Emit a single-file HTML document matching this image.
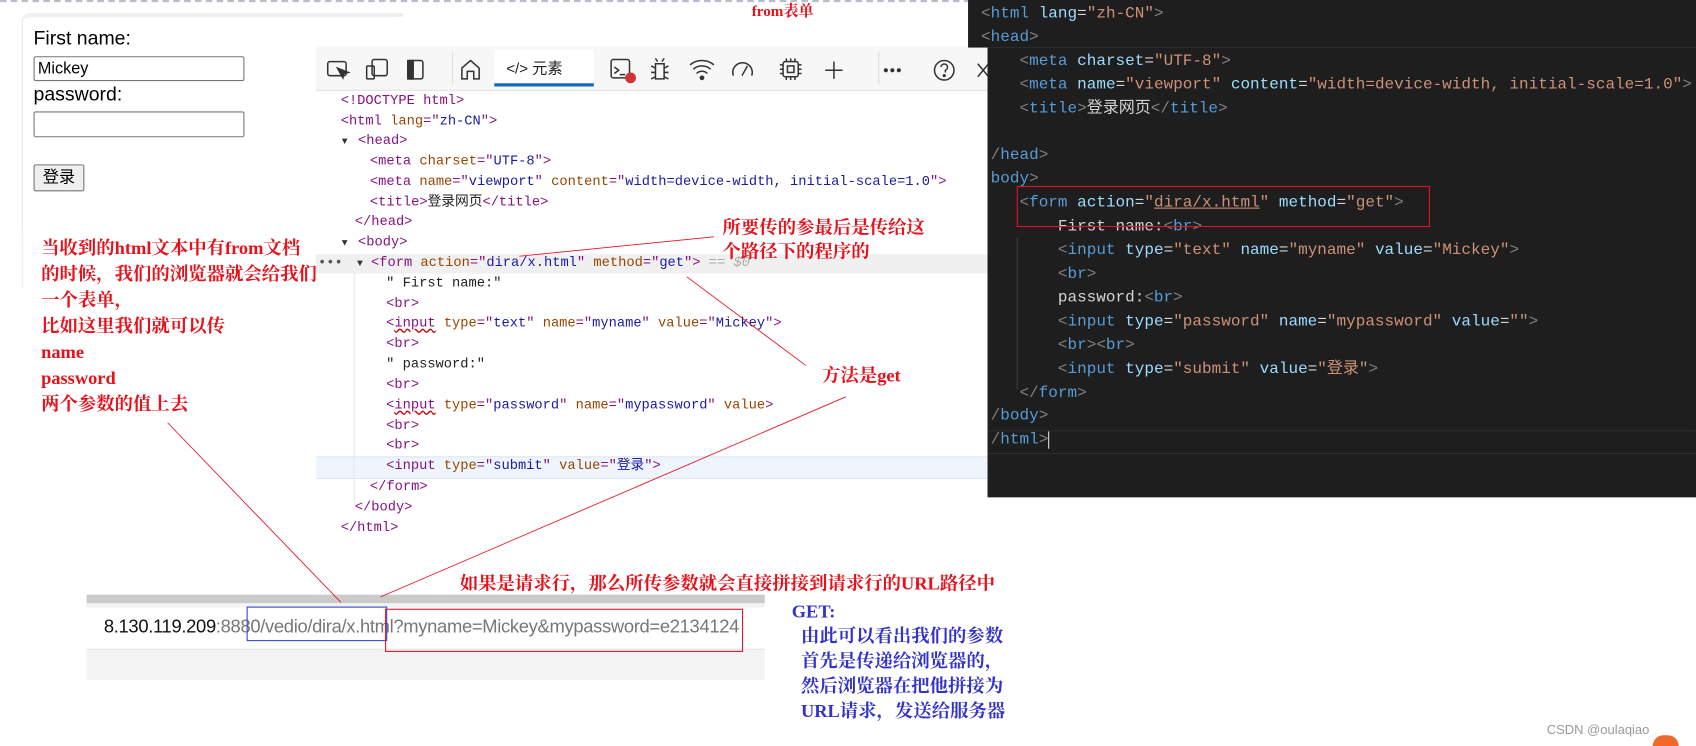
<!DOCTYPE html>
<html><head><meta charset="utf-8">
<style>
html,body{margin:0;padding:0;background:#fff;overflow:hidden;width:1696px;height:746px}
#w{position:absolute;left:0;top:0;width:1568px;height:690px;transform:scale(1.08163,1.0812);transform-origin:0 0;font-family:"Liberation Sans","Noto Sans CJK SC",sans-serif}
.a{position:absolute;white-space:pre}
.m{font-family:"Liberation Mono","Noto Sans CJK SC",monospace}
.dt{font-size:12.7px;line-height:18.8px;color:#202124}
.dt div{position:absolute;white-space:pre}
.t{color:#881280}.n{color:#994500}.v{color:#1a1aa6}
.ed{font-size:14.8px;line-height:21.9px;color:#d4d4d4}
.g{color:#808080}.b{color:#569cd6}.at{color:#9cdcfe}.s{color:#ce9178}
.r{color:#e8101a;font-family:"Liberation Serif","Noto Serif CJK SC",serif;font-size:17px;font-weight:bold}
.bl{color:#3333cc;font-family:"Liberation Serif","Noto Serif CJK SC",serif;font-size:17px;font-weight:bold}
.tri{font-size:9px;color:#333}
</style></head><body><div id="w">
<div class="a" style="left:0;top:0;width:1568px;height:3px;border-top:2px dashed #b8bcd0"></div>

<!-- left browser form -->
<div class="a" style="left:20px;top:12px;width:352px;height:250px;background:#fff;border-left:1px solid #e4e4e4;border-top:4px solid #f0f0f0;border-radius:8px 0 0 0"></div>
<div class="a" style="left:31px;top:25px;font-size:18px">First name:</div>
<div class="a" style="left:31px;top:52px;width:193px;height:21px;border:1px solid #767676;border-radius:2px;font-size:15px;line-height:21px;text-indent:3px">Mickey</div>
<div class="a" style="left:31px;top:77px;font-size:18px">password:</div>
<div class="a" style="left:31px;top:103px;width:193px;height:22px;border:1px solid #767676;border-radius:2px"></div>
<div class="a" style="left:31px;top:152px;width:45px;height:23px;border:1px solid #767676;border-radius:2px;background:#efefef;font-size:15px;line-height:23px;text-align:center">登录</div>

<div class="a r" style="left:695px;top:0px;font-size:14px">from表单</div>

<!-- devtools -->
<div class="a" style="left:292px;top:43px;width:625px;height:40px;background:#f7f7f7;border-bottom:1px solid #e0e0e0"></div>
<div class="a" style="left:457px;top:46px;width:92px;height:34px;background:#fff;border-bottom:3px solid #0f6cbd;box-sizing:border-box"></div>
<div class="a" style="left:468px;top:53px;font-size:14px;color:#222">&lt;/&gt; 元素</div>
<div class="a" style="left:418px;top:48px;width:1px;height:30px;background:#ddd"></div>
<div class="a" style="left:812px;top:48px;width:1px;height:30px;background:#ddd"></div>
<svg class="a" style="left:292px;top:43px" width="625" height="40" fill="none" stroke="#333" stroke-width="1.4">
<rect x="11" y="14" width="17" height="13" rx="2"/><path d="M20 20l5 9 1-4 4-1z" fill="#333"/>
<rect x="52" y="12" width="14" height="15" rx="2"/><rect x="47" y="18" width="7" height="12" rx="1"/>
<rect x="85" y="13" width="14" height="17" rx="2"/><rect x="85" y="13" width="5" height="17" fill="#333"/>
<path d="M135 30v-10l8-7 8 7v10h-5v-7h-6v7z"/>
<rect x="273" y="12" width="17" height="17" rx="2"/><path d="M276 19l4 3-4 3M281 26h5"/>
<circle cx="291" cy="29" r="5" fill="#d13438" stroke="none"/>
<path d="M314 16h8v14h-8zM310 18l4 2M326 18l-4 2M310 24h4M322 24h4M310 30l4-2M326 30l-4-2M316 14l-2-3M320 14l2-3"/>
<path d="M349 21a12 12 0 0 1 16 0M352 25a7 7 0 0 1 10 0"/><circle cx="357" cy="29" r="1.5" fill="#333"/><path d="M346 17a17 17 0 0 1 22 0"/>
<path d="M386 27a9 9 0 1 1 17 0M394 27l5-9"/>
<rect x="432" y="14" width="14" height="14" rx="2"/><rect x="436" y="18" width="6" height="6"/><path d="M435 11v3M439 11v3M443 11v3M435 28v3M439 28v3M443 28v3M429 17h3M429 21h3M429 25h3M446 17h3M446 21h3M446 25h3"/>
<path d="M479 14v16M471 22h16"/>
<circle cx="527" cy="22" r="1.2" fill="#333"/><circle cx="533" cy="22" r="1.2" fill="#333"/><circle cx="539" cy="22" r="1.2" fill="#333"/>
<circle cx="581" cy="22" r="9"/><path d="M578 19a3 3 0 1 1 4 3v2"/><circle cx="581" cy="27" r=".8" fill="#333"/>
<path d="M612 16l10 12M622 16l-10 12"/>
</svg>
<div class="a" style="left:292px;top:235px;width:625px;height:18px;background:#f0f0f0"></div>
<div class="a" style="left:292px;top:422px;width:625px;height:19px;background:#eff5fd;border-top:1px solid #dde6f2;border-bottom:1px solid #dde6f2"></div>
<div class="a" style="left:327px;top:252px;width:1px;height:215px;background:#e6e6e6"></div>
<div class="a m dt" style="left:0;top:0">
<div style="left:315px;top:84px"><span class="t">&lt;!DOCTYPE html&gt;</span></div>
<div style="left:315px;top:103px"><span class="t">&lt;html</span> <span class="n">lang</span><span class="t">="</span><span class="v">zh-CN</span><span class="t">"&gt;</span></div>
<div style="left:316px;top:121px"><span class="tri">▼</span></div>
<div style="left:331px;top:121px"><span class="t">&lt;head&gt;</span></div>
<div style="left:342px;top:140px"><span class="t">&lt;meta</span> <span class="n">charset</span><span class="t">="</span><span class="v">UTF-8</span><span class="t">"&gt;</span></div>
<div style="left:342px;top:159px"><span class="t">&lt;meta</span> <span class="n">name</span><span class="t">="</span><span class="v">viewport</span><span class="t">"</span> <span class="n">content</span><span class="t">="</span><span class="v">width=device-width, initial-scale=1.0</span><span class="t">"&gt;</span></div>
<div style="left:342px;top:178px"><span class="t">&lt;title&gt;</span>登录网页<span class="t">&lt;/title&gt;</span></div>
<div style="left:328px;top:196px"><span class="t">&lt;/head&gt;</span></div>
<div style="left:316px;top:215px"><span class="tri">▼</span></div>
<div style="left:331px;top:215px"><span class="t">&lt;body&gt;</span></div>
<div style="left:294px;top:234px"><span style="color:#555">•••</span></div>
<div style="left:330px;top:234px"><span class="tri">▼</span></div>
<div style="left:343px;top:234px"><span class="t">&lt;form</span> <span class="n">action</span><span class="t">="</span><span class="v">dira/x.html</span><span class="t">"</span> <span class="n">method</span><span class="t">="</span><span class="v">get</span><span class="t">"&gt;</span> <span style="color:#aaa">== <i>$0</i></span></div>
<div style="left:357px;top:253px">" First name:"</div>
<div style="left:357px;top:272px"><span class="t">&lt;br&gt;</span></div>
<div style="left:357px;top:290px"><span class="t">&lt;<u style="text-decoration:underline wavy #c00">input</u></span> <span class="n">type</span><span class="t">="</span><span class="v">text</span><span class="t">"</span> <span class="n">name</span><span class="t">="</span><span class="v">myname</span><span class="t">"</span> <span class="n">value</span><span class="t">="</span><span class="v">Mickey</span><span class="t">"&gt;</span></div>
<div style="left:357px;top:309px"><span class="t">&lt;br&gt;</span></div>
<div style="left:357px;top:328px">" password:"</div>
<div style="left:357px;top:347px"><span class="t">&lt;br&gt;</span></div>
<div style="left:357px;top:366px"><span class="t">&lt;<u style="text-decoration:underline wavy #c00">input</u></span> <span class="n">type</span><span class="t">="</span><span class="v">password</span><span class="t">"</span> <span class="n">name</span><span class="t">="</span><span class="v">mypassword</span><span class="t">"</span> <span class="n">value</span><span class="t">&gt;</span></div>
<div style="left:357px;top:385px"><span class="t">&lt;br&gt;</span></div>
<div style="left:357px;top:403px"><span class="t">&lt;br&gt;</span></div>
<div style="left:357px;top:422px"><span class="t">&lt;input</span> <span class="n">type</span><span class="t">="</span><span class="v">submit</span><span class="t">"</span> <span class="n">value</span><span class="t">="</span><span class="v">登录</span><span class="t">"&gt;</span></div>
<div style="left:342px;top:441px"><span class="t">&lt;/form&gt;</span></div>
<div style="left:328px;top:460px"><span class="t">&lt;/body&gt;</span></div>
<div style="left:315px;top:479px"><span class="t">&lt;/html&gt;</span></div>
</div>

<!-- dark editor -->
<div class="a" style="left:895px;top:0;width:673px;height:44px;background:#1e1e1e"></div>
<div class="a" style="left:913px;top:44px;width:655px;height:416px;background:#1e1e1e"></div>
<div class="a" style="left:913px;top:398px;width:655px;height:20px;border-top:1px solid #2c2c2c;border-bottom:1px solid #2c2c2c"></div>
<div class="a" style="left:940px;top:220px;width:1px;height:140px;background:#404040"></div>
<div class="a m ed" style="left:907px;top:3px"><span class="g">&lt;</span><span class="b">html</span> <span class="at">lang</span>=<span class="s">"zh-CN"</span><span class="g">&gt;</span>
<span class="g">&lt;</span><span class="b">head</span><span class="g">&gt;</span>
    <span class="g">&lt;</span><span class="b">meta</span> <span class="at">charset</span>=<span class="s">"UTF-8"</span><span class="g">&gt;</span>
    <span class="g">&lt;</span><span class="b">meta</span> <span class="at">name</span>=<span class="s">"viewport"</span> <span class="at">content</span>=<span class="s">"width=device-width, initial-scale=1.0"</span><span class="g">&gt;</span>
    <span class="g">&lt;</span><span class="b">title</span><span class="g">&gt;</span>登录网页<span class="g">&lt;/</span><span class="b">title</span><span class="g">&gt;</span>

 <span class="g">/</span><span class="b">head</span><span class="g">&gt;</span>
 <span class="b">body</span><span class="g">&gt;</span>
    <span class="g">&lt;</span><span class="b">form</span> <span class="at">action</span>=<span class="s">"<u>dira/x.html</u>"</span> <span class="at">method</span>=<span class="s">"get"</span><span class="g">&gt;</span>
        First name:<span class="g">&lt;</span><span class="b">br</span><span class="g">&gt;</span>
        <span class="g">&lt;</span><span class="b">input</span> <span class="at">type</span>=<span class="s">"text"</span> <span class="at">name</span>=<span class="s">"myname"</span> <span class="at">value</span>=<span class="s">"Mickey"</span><span class="g">&gt;</span>
        <span class="g">&lt;</span><span class="b">br</span><span class="g">&gt;</span>
        password:<span class="g">&lt;</span><span class="b">br</span><span class="g">&gt;</span>
        <span class="g">&lt;</span><span class="b">input</span> <span class="at">type</span>=<span class="s">"password"</span> <span class="at">name</span>=<span class="s">"mypassword"</span> <span class="at">value</span>=<span class="s">""</span><span class="g">&gt;</span>
        <span class="g">&lt;</span><span class="b">br</span><span class="g">&gt;&lt;</span><span class="b">br</span><span class="g">&gt;</span>
        <span class="g">&lt;</span><span class="b">input</span> <span class="at">type</span>=<span class="s">"submit"</span> <span class="at">value</span>=<span class="s">"登录"</span><span class="g">&gt;</span>
    <span class="g">&lt;/</span><span class="b">form</span><span class="g">&gt;</span>
 <span class="g">/</span><span class="b">body</span><span class="g">&gt;</span>
 <span class="g">/</span><span class="b">html</span><span class="g">&gt;</span><span style="border-left:1px solid #ddd"> </span></div>
<div class="a" style="left:940px;top:172px;width:380px;height:36px;border:1px solid #e81123"></div>

<!-- annotations -->
<div class="a r" style="left:38px;top:218px;line-height:24px">当收到的html文本中有from文档
的时候，我们的浏览器就会给我们
一个表单，
比如这里我们就可以传
name
password
两个参数的值上去</div>
<div class="a r" style="left:668px;top:200px;line-height:22px">所要传的参最后是传给这
个路径下的程序的</div>
<div class="a r" style="left:760px;top:333px">方法是get</div>
<div class="a r" style="left:425px;top:525px">如果是请求行，那么所传参数就会直接拼接到请求行的URL路径中</div>
<div class="a bl" style="left:732px;top:554px;line-height:23px">GET:
  由此可以看出我们的参数
  首先是传递给浏览器的，
  然后浏览器在把他拼接为
  URL请求，发送给服务器</div>

<!-- URL bar -->
<div class="a" style="left:80px;top:550px;width:627px;height:8px;background:#cacaca"></div>
<div class="a" style="left:80px;top:558px;width:627px;height:4px;background:#f3f3f3"></div>
<div class="a" style="left:80px;top:600px;width:627px;height:28px;background:#f3f3f3;border-top:1px solid #e4e4e4"></div>
<div class="a" style="left:96px;top:570px;font-size:17px;letter-spacing:-0.3px;color:#111">8.130.119.209<span style="color:#777">:8880/vedio/dira/x.html?myname=Mickey&amp;mypassword=e2134124</span></div>
<div class="a" style="left:228px;top:561px;width:128px;height:30px;border:1px solid #3344cc"></div>
<div class="a" style="left:356px;top:563px;width:329px;height:38px;border:1px solid #e81123"></div>

<svg class="a" style="left:0;top:0" width="1568" height="690" stroke="#e81123" stroke-width="0.8" fill="none">
<line x1="480" y1="237" x2="660" y2="219"/>
<line x1="635" y1="256" x2="745" y2="338"/>
<line x1="782" y1="367" x2="352" y2="552"/>
<line x1="155" y1="391" x2="315" y2="557"/>
</svg>

<div class="a" style="left:1430px;top:668px;font-size:12px;color:#999">CSDN @oulaqiao</div>
<div class="a" style="left:1528px;top:680px;width:24px;height:10px;background:#f2682a;border-radius:10px 10px 0 0"></div>
</div></body></html>
